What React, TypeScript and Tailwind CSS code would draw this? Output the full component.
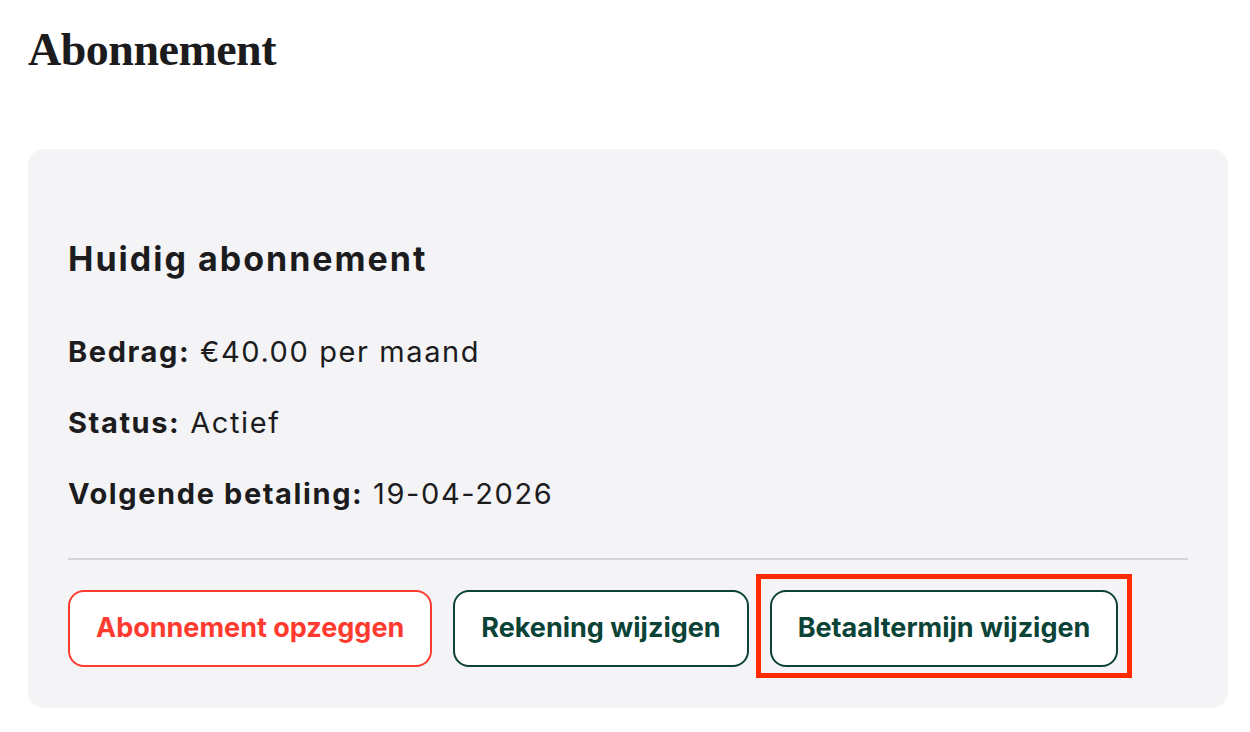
export default function App() {
  const rows = [
    { label: "Bedrag:", value: "€40.00 per maand" },
    { label: "Status:", value: "Actief" },
    { label: "Volgende betaling:", value: "19-04-2026" },
  ];

  return (
    <div className="min-h-screen bg-white pl-[28px] pt-[24px] text-[#1c1c1e]">
      <h1 className="font-['Liberation_Serif',serif] text-[46px] font-bold leading-[52px] tracking-[-0.5px]">
        Abonnement
      </h1>

      <section className="mt-[73px] w-[1200px] rounded-2xl bg-[#f4f4f6] px-10 pb-[41px] pt-[90px] font-['Inter',sans-serif]">
        <h2 className="text-[34px] font-bold leading-[40px] tracking-[2px]">Huidig abonnement</h2>

        <div className="mt-[51px] flex flex-col gap-[27px]">
          {rows.map((row) => (
            <p key={row.label} className="text-[29px] leading-[44px] tracking-[1.6px]">
              <span className="font-bold">{row.label}</span> {row.value}
            </p>
          ))}
        </div>

        <div className="mt-[42px] h-[2px] bg-[#d4d4d8]" />

        <div className="mt-[30px] flex items-center gap-[21px] text-[27px] font-bold">
          <button className="h-[77px] rounded-2xl border-2 border-[#ff3b30] bg-white px-[26px] text-[#ff3b30]">
            Abonnement opzeggen
          </button>
          <button className="h-[77px] rounded-2xl border-2 border-[#0b4337] bg-white px-[26px] text-[#0b4337]">
            Rekening wijzigen
          </button>
          <div className="relative">
            <button className="h-[77px] rounded-2xl border-2 border-[#0b4337] bg-white px-[26px] text-[#0b4337]">
              Betaaltermijn wijzigen
            </button>
            <div className="pointer-events-none absolute -bottom-[11px] -left-[14px] -right-[14px] -top-[16px] border-[5px] border-[#ff2a00]" />
          </div>
        </div>
      </section>
    </div>
  );
}
